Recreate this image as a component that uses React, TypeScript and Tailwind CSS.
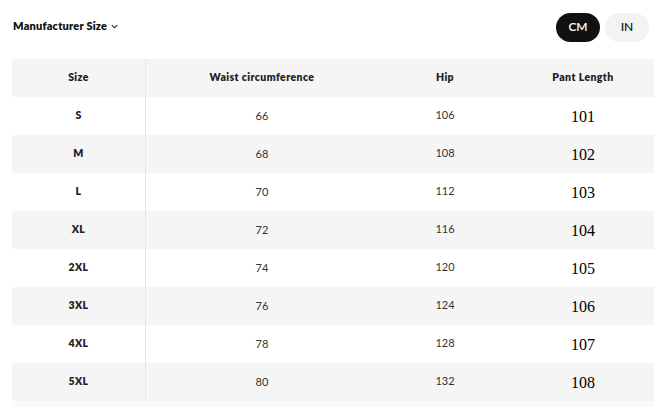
import React from "react";

const rows = [
  ["S", "66", "106", "101"],
  ["M", "68", "108", "102"],
  ["L", "70", "112", "103"],
  ["XL", "72", "116", "104"],
  ["2XL", "74", "120", "105"],
  ["3XL", "76", "124", "106"],
  ["4XL", "78", "128", "107"],
  ["5XL", "80", "132", "108"],
];

const sans = { fontFamily: "Lato, 'Noto Sans', sans-serif" };

export default function App() {
  return (
    <div className="w-[664px] h-[407px] bg-white overflow-hidden" style={sans}>
      <div className="flex items-center justify-between pl-[13px] pr-[15px] pt-[12px] h-[42px]">
        <div className="flex items-center gap-[3px] text-[11px] font-extrabold text-[#111] tracking-[0.2px] pb-[1px]">
          <span>Manufacturer Size</span>
          <svg width="9" height="9" viewBox="0 0 10 10" fill="none" stroke="#222" strokeWidth="1.2">
            <path d="M2 3.5 L5 6.5 L8 3.5" />
          </svg>
        </div>
        <div className="flex items-center gap-[5px]">
          <div className="w-[44px] h-[29px] rounded-full bg-[#111] text-white text-[12px] font-semibold flex items-center justify-center">CM</div>
          <div className="w-[44px] h-[29px] rounded-full bg-[#f3f3f3] text-[#222] text-[12px] font-semibold flex items-center justify-center">IN</div>
        </div>
      </div>
      <div className="ml-[12px] mt-[17px] w-[642px]">
        <div className="flex h-[38px] bg-[#f5f5f5] text-[10.5px] font-extrabold text-[#222] tracking-[0.4px]">
          <div className="w-[134px] flex items-center justify-center border-r border-[#e6e6e6]">Size</div>
          <div className="w-[232px] flex items-center justify-center">Waist circumference</div>
          <div className="w-[134px] flex items-center justify-center">Hip</div>
          <div className="w-[142px] flex items-center justify-center">Pant Length</div>
        </div>
        {rows.map((r, i) => (
          <div key={r[0]} className={`flex h-[38px] ${i % 2 === 1 ? "bg-[#f5f5f5]" : "bg-white"}`}>
            <div className="w-[134px] flex items-center justify-center border-r border-[#e6e6e6] text-[10.5px] font-extrabold text-[#222] tracking-[0.4px]">{r[0]}</div>
            <div className="w-[232px] flex items-center justify-center text-[11px] text-[#333]">{r[1]}</div>
            <div className="w-[134px] flex items-center justify-center text-[11px] text-[#333] pb-[2px]">{r[2]}</div>
            <div className="w-[142px] flex items-center justify-center text-[16px] text-black pt-[1px]" style={{ fontFamily: "'Liberation Serif', serif" }}>{r[3]}</div>
          </div>
        ))}
        <div className="h-[6px] bg-[#fafafa]" />
      </div>
    </div>
  );
}
